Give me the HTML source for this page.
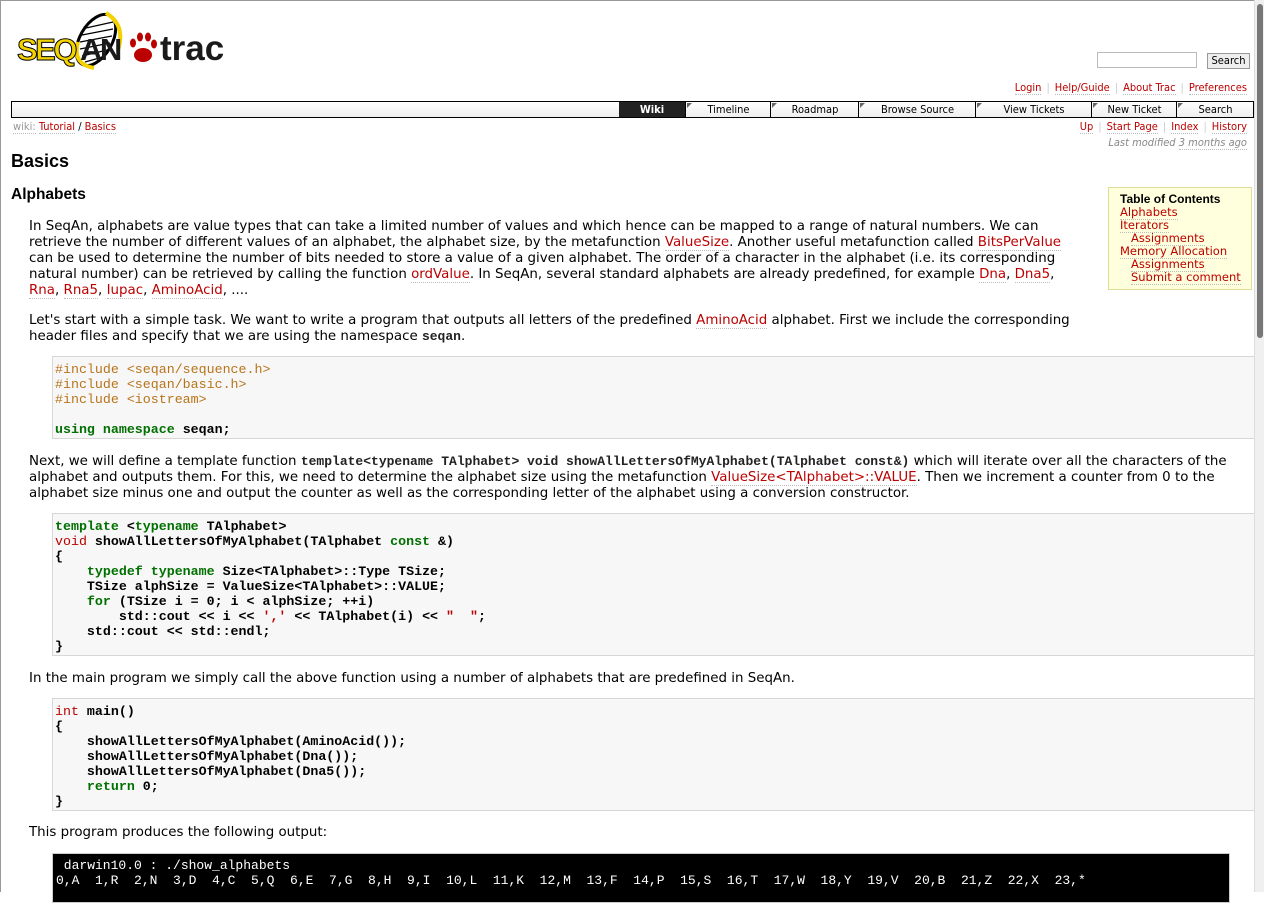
<!DOCTYPE html>
<html><head><meta charset="utf-8">
<style>
html,body{margin:0;padding:0;}
body{width:1264px;height:892px;overflow:hidden;position:relative;background:#fff;font-family:"DejaVu Sans","Liberation Sans",sans-serif;font-size:13.4px;color:#000;}
#frame{position:absolute;left:0;top:0;width:1262px;height:892px;border:1px solid #999;border-bottom:none;box-sizing:border-box;}
#sb{position:absolute;left:1254px;top:0;width:10px;height:892px;background:#f0f0f0;border-left:1px solid #ddd;}
#sb div{position:absolute;left:2px;top:4px;width:6px;height:334px;background:#777;border-radius:3px;}
a{color:#b00;text-decoration:none;border-bottom:1px dotted #bbb;}
.abs{position:absolute;white-space:nowrap;}
.small{font-size:11px;font-family:"DejaVu Sans Condensed","DejaVu Sans",sans-serif;}
.sep{color:#ccc;margin:0 5px;}
#nav{position:absolute;left:11px;top:101px;width:1241px;height:15px;border:1px solid #000;background:linear-gradient(#fff,#eee);}
#nav div{position:absolute;top:0;height:15px;line-height:15px;text-align:center;font-size:11px;font-family:"DejaVu Sans Condensed","DejaVu Sans",sans-serif;border-left:1px solid #000;}
#nav div:before{content:"";position:absolute;left:1px;top:1px;border-top:5px solid #666;border-right:5px solid transparent;}
#nav div.w{background:#222;color:#fff;font-weight:bold;}
#nav div.w:before{display:none;}
p{margin:0;}
.para{position:absolute;left:29px;white-space:nowrap;line-height:16px;}
tt,.tt{font-family:"Liberation Mono",monospace;font-size:13px;font-weight:bold;color:#222;}
pre{position:absolute;margin:0;left:52px;width:1206px;box-sizing:border-box;background:#f7f7f7;border:1px solid #d7d7d7;padding:5px 2px;font-family:"Liberation Mono",monospace;font-size:13.3px;line-height:15px;color:#000;font-weight:bold;}
.pp{color:#b8741a;font-weight:normal;}
.k{color:#007000;font-weight:bold;}
.t{color:#b00;font-weight:normal;}
.s{color:#b00;}
#out{position:absolute;left:52px;top:853px;width:1178px;height:50px;background:#000;color:#fff;font-family:"Liberation Mono",monospace;font-size:13px;line-height:15px;padding:4px 3px;box-sizing:border-box;white-space:pre;border:1px solid #ccc;}
</style></head><body>
<div id="frame"></div>

<!-- logo -->
<svg class="abs" style="left:16px;top:10px" width="212" height="60" viewBox="0 0 212 60">
  <ellipse cx="80" cy="30" rx="16" ry="28" transform="rotate(30 80 30)" fill="#fff" stroke="#000" stroke-width="3"/>
  <g stroke="#000" stroke-width="1.2">
    <line x1="70" y1="18" x2="97" y2="12"/><line x1="66" y1="25" x2="97" y2="19"/><line x1="64" y1="32" x2="96" y2="26"/><line x1="64" y1="39" x2="94" y2="33"/><line x1="66" y1="46" x2="91" y2="40"/><line x1="69" y1="52" x2="87" y2="47"/>
  </g>
  <path d="M90 3 Q110 15 102 40" fill="none" stroke="#f3d200" stroke-width="4"/>
  <path d="M62 32 Q56 54 78 58" fill="none" stroke="#f3d200" stroke-width="4"/>
  <text x="1" y="50" font-family="Liberation Sans,sans-serif" font-weight="bold" font-size="31" fill="#f3d200" stroke="#000" stroke-width="1" letter-spacing="-2.5">SEQ</text>
  <text x="64" y="50" font-family="Liberation Sans,sans-serif" font-weight="bold" font-size="31" fill="#1a1a1a" letter-spacing="-2.5">AN</text>
  <g fill="#b00">
    <ellipse cx="127" cy="45" rx="9" ry="7"/>
    <ellipse cx="117" cy="33" rx="3" ry="4.5"/><ellipse cx="124" cy="27" rx="3" ry="4.5"/><ellipse cx="132" cy="27" rx="3" ry="4.5"/><ellipse cx="138" cy="34" rx="3" ry="4.5"/>
  </g>
  <text x="144" y="50" font-family="Liberation Sans,sans-serif" font-weight="bold" font-size="35" fill="#1a1a1a">trac</text>
</svg>

<!-- search -->
<div class="abs" style="left:1097px;top:52px;width:100px;height:16px;border:1px solid #bbb;box-sizing:border-box;"></div>
<div class="abs" style="left:1207px;top:53px;width:43px;height:16px;border:1px solid #999;background:#eee;font-size:11px;line-height:14px;text-align:center;box-sizing:border-box;font-family:'DejaVu Sans Condensed','DejaVu Sans',sans-serif;">Search</div>

<div class="abs small" style="right:17px;top:81px;"><a>Login</a><span class="sep">|</span><a>Help/Guide</a><span class="sep">|</span><a>About Trac</a><span class="sep">|</span><a>Preferences</a></div>

<div id="nav">
  <div class="w" style="left:607px;width:66px;border-left:none;">Wiki</div>
  <div style="left:673px;width:85px;">Timeline</div>
  <div style="left:758px;width:88px;">Roadmap</div>
  <div style="left:846px;width:117px;">Browse Source</div>
  <div style="left:963px;width:116px;">View Tickets</div>
  <div style="left:1079px;width:85px;">New Ticket</div>
  <div style="left:1164px;width:77px;">Search</div>
</div>

<div class="abs small" style="left:13px;top:120px;"><span style="color:#999;border-bottom:1px dotted #bbb">wiki:</span> <a>Tutorial</a> / <a>Basics</a></div>
<div class="abs small" style="right:17px;top:120px;"><a>Up</a><span class="sep">|</span><a>Start Page</a><span class="sep">|</span><a>Index</a><span class="sep">|</span><a>History</a></div>
<div class="abs small" style="right:17px;top:136px;color:#888;font-style:italic;">Last modified <span style="border-bottom:1px dotted #bbb">3 months ago</span></div>

<div class="abs" style="left:11px;top:151px;font-size:18px;font-weight:bold;font-family:'Liberation Sans',sans-serif;">Basics</div>
<div class="abs" style="left:11px;top:186px;font-size:15.5px;font-weight:bold;font-family:'Liberation Sans',sans-serif;">Alphabets</div>

<div class="abs" style="left:1108px;top:187px;width:144px;height:103px;background:#ffd;border:1px solid #dd9;box-sizing:border-box;padding:5px 11px;font-size:11.5px;line-height:13px;">
<div style="font-weight:bold;font-family:'Liberation Sans',sans-serif;font-size:12px;">Table of Contents</div>
<a>Alphabets</a><br><a>Iterators</a><br>&nbsp;&nbsp;&nbsp;<a>Assignments</a><br><a>Memory Allocation</a><br>&nbsp;&nbsp;&nbsp;<a>Assignments</a><br>&nbsp;&nbsp;&nbsp;<a>Submit a comment</a>
</div>

<div class="para" style="top:219px;">In SeqAn, alphabets are value types that can take a limited number of values and which hence can be mapped to a range of natural numbers. We can<br>retrieve the number of different values of an alphabet, the alphabet size, by the metafunction <a>ValueSize</a>. Another useful metafunction called <a>BitsPerValue</a><br>can be used to determine the number of bits needed to store a value of a given alphabet. The order of a character in the alphabet (i.e. its corresponding<br>natural number) can be retrieved by calling the function <a>ordValue</a>. In SeqAn, several standard alphabets are already predefined, for example <a>Dna</a>, <a>Dna5</a>,<br><a>Rna</a>, <a>Rna5</a>, <a>Iupac</a>, <a>AminoAcid</a>, ....</div>

<div class="para" style="top:313px;">Let's start with a simple task. We want to write a program that outputs all letters of the predefined <a>AminoAcid</a> alphabet. First we include the corresponding<br>header files and specify that we are using the namespace <tt>seqan</tt>.</div>

<pre style="top:356px;height:83px;"><span class="pp">#include &lt;seqan/sequence.h&gt;
#include &lt;seqan/basic.h&gt;
#include &lt;iostream&gt;</span>

<span class="k">using</span> <span class="k">namespace</span> seqan;</pre>

<div class="para" style="top:454px;">Next, we will define a template function <tt>template&lt;typename TAlphabet&gt; void showAllLettersOfMyAlphabet(TAlphabet const&amp;)</tt> which will iterate over all the characters of the<br>alphabet and outputs them. For this, we need to determine the alphabet size using the metafunction <a>ValueSize&lt;TAlphabet&gt;::VALUE</a>. Then we increment a counter from 0 to the<br>alphabet size minus one and output the counter as well as the corresponding letter of the alphabet using a conversion constructor.</div>

<pre style="top:513px;height:143px;"><span class="k">template</span> &lt;<span class="k">typename</span> TAlphabet&gt;
<span class="t">void</span> showAllLettersOfMyAlphabet(TAlphabet <span class="k">const</span> &amp;)
{
    <span class="k">typedef</span> <span class="k">typename</span> Size&lt;TAlphabet&gt;::Type TSize;
    TSize alphSize = ValueSize&lt;TAlphabet&gt;::VALUE;
    <span class="k">for</span> (TSize i = 0; i &lt; alphSize; ++i)
        std::cout &lt;&lt; i &lt;&lt; <span class="s">','</span> &lt;&lt; TAlphabet(i) &lt;&lt; <span class="s">"  "</span>;
    std::cout &lt;&lt; std::endl;
}</pre>

<div class="para" style="top:671px;">In the main program we simply call the above function using a number of alphabets that are predefined in SeqAn.</div>

<pre style="top:698px;height:113px;"><span class="t">int</span> main()
{
    showAllLettersOfMyAlphabet(AminoAcid());
    showAllLettersOfMyAlphabet(Dna());
    showAllLettersOfMyAlphabet(Dna5());
    <span class="k">return</span> 0;
}</pre>

<div class="para" style="top:825px;">This program produces the following output:</div>

<div id="out"> darwin10.0 : ./show_alphabets
0,A  1,R  2,N  3,D  4,C  5,Q  6,E  7,G  8,H  9,I  10,L  11,K  12,M  13,F  14,P  15,S  16,T  17,W  18,Y  19,V  20,B  21,Z  22,X  23,*</div>

<div id="sb"><div></div></div>
</body></html>
